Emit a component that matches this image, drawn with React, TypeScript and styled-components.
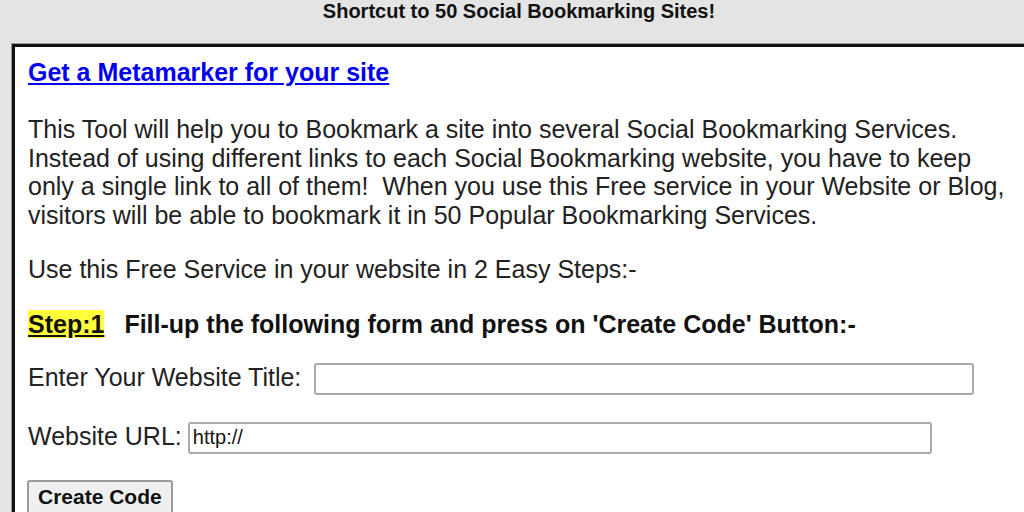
import styled, { createGlobalStyle } from "styled-components";

const GlobalStyle = createGlobalStyle`
  html, body {
    margin: 0;
    background: #e4e4e4;
    overflow: hidden;
  }
  body {
    font-family: "Liberation Sans", Arial, sans-serif;
    color: #222;
  }
`;

const Page = styled.div`
  width: 1024px;
  height: 512px;
  overflow: hidden;
`;

const Header = styled.div`
  height: 44px;
  display: flex;
  justify-content: center;
  padding-left: 14px;
  font-weight: bold;
  font-size: 20px;
  line-height: 23px;
  color: #111;
`;

const Panel = styled.div`
  margin-left: 12px;
  width: 1100px;
  background: #fff;
  border-top: 3px solid #111;
  border-left: 3px solid #111;
  box-shadow: -1px -1px 0 #999;
  padding: 11px 13px 0;
  font-size: 25px;
  line-height: 28.75px;
`;

const Link = styled.a`
  display: block;
  color: #0000ee;
  font-weight: bold;
  text-decoration: underline;
  margin-bottom: 28px;
`;

const Para = styled.p<{ $gap?: number }>`
  margin: 0 0 ${(p) => p.$gap ?? 25}px;
  width: 985px;
`;

const StepRow = styled.div`
  display: flex;
  align-items: baseline;
  gap: 20px;
  font-weight: bold;
  color: #111;
  margin-bottom: 25px;
`;

const StepTag = styled.span`
  background: #ffff3a;
  text-decoration: underline;
`;

const Field = styled.div<{ $gap: number }>`
  display: flex;
  align-items: center;
  gap: ${(p) => p.$gap}px;
  margin-bottom: 27px;
`;

const Label = styled.label`
  position: relative;
  top: -2px;
`;

const Input = styled.input<{ $w: number }>`
  width: ${(p) => p.$w}px;
  height: 32px;
  box-sizing: border-box;
  border: 2px solid #aaa;
  border-radius: 3px;
  font-family: "Liberation Sans", Arial, sans-serif;
  font-size: 20px;
  padding: 1px 3px 3px;
  color: #111;
`;

const Button = styled.button`
  margin-left: -1px;
  margin-top: -1px;
  height: 38px;
  padding: 0 9px 4px;
  background: #efefef;
  border: 2px solid #999;
  border-radius: 3px;
  font-family: "Liberation Sans", Arial, sans-serif;
  font-weight: bold;
  font-size: 21px;
  color: #111;
`;

export default function App() {
  return (
    <Page>
      <GlobalStyle />
      <Header>Shortcut to 50 Social Bookmarking Sites!</Header>
      <Panel>
        <Link href="#">Get a Metamarker for your site</Link>
        <Para>
          This Tool will help you to Bookmark a site into several Social Bookmarking Services.
          Instead of using different links to each Social Bookmarking website, you have to keep
          only a single link to all of them!&nbsp; When you use this Free service in your Website or Blog,
          visitors will be able to bookmark it in 50 Popular Bookmarking Services.
        </Para>
        <Para $gap={26}>Use this Free Service in your website in 2 Easy Steps:-</Para>
        <StepRow>
          <StepTag>Step:1</StepTag>
          <span>Fill-up the following form and press on 'Create Code' Button:-</span>
        </StepRow>
        <Field $gap={13}>
          <Label>Enter Your Website Title:</Label>
          <Input $w={660} />
        </Field>
        <Field $gap={6}>
          <Label>Website URL:</Label>
          <Input $w={744} defaultValue="http://" />
        </Field>
        <Button>Create Code</Button>
      </Panel>
    </Page>
  );
}
